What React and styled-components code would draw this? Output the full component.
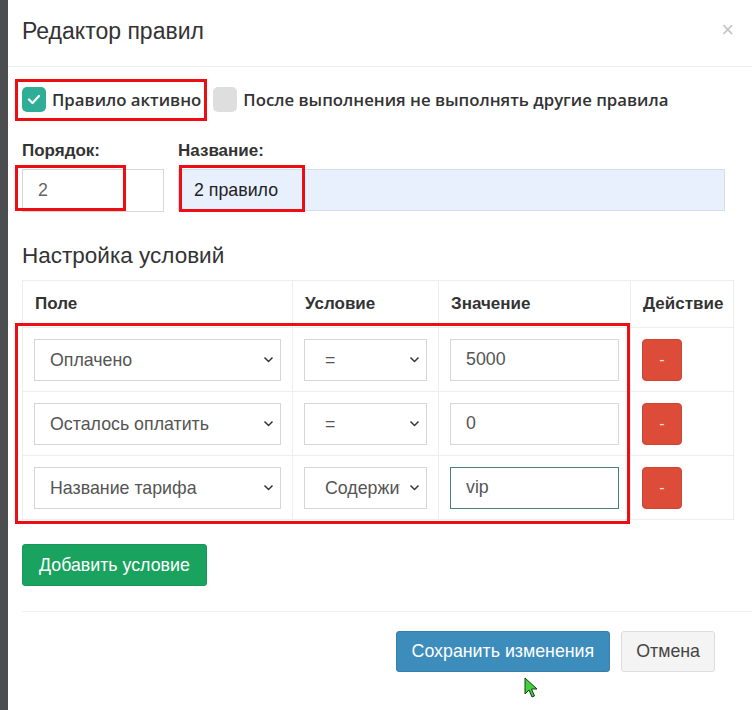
import React from 'react';
import styled, { createGlobalStyle } from 'styled-components';

const GlobalStyle = createGlobalStyle`
    body {
        margin: 0;
        background: #4b4d4f;
        font-family: "Liberation Sans", Arial, sans-serif;
    }
`;

const Modal = styled.div`
    position: relative;
    margin-left: 8px;
    width: 744px;
    height: 710px;
    background: #fff;
    overflow: hidden;
`;

const Header = styled.div`
    display: flex;
    justify-content: space-between;
    align-items: center;
    height: 67px;
    padding: 0 18px 0 14px;
    border-bottom: 1px solid #ececec;
    box-sizing: border-box;
    h4 {
        margin: 0;
        font-size: 23px;
        font-weight: 400;
        color: #333;
        padding-bottom: 4px;
    }
`;

const Close = styled.span`
    font-size: 22px;
    color: #c4c4c4;
    padding-bottom: 6px;
`;

const Body = styled.div`
    padding: 0 19px 0 14px;
`;

const CheckRow = styled.div`
    display: flex;
    align-items: center;
    height: 65px;
`;

const CheckItem = styled.label`
    display: flex;
    align-items: center;
    gap: 6px;
    margin-right: 12px;
    font-family: "Open Sans", sans-serif;
    font-weight: 600;
    font-size: 16.8px;
    color: #333;
`;

const Box = styled.span`
    display: flex;
    align-items: center;
    justify-content: center;
    width: 24px;
    height: 25px;
    border-radius: 5px;
    background: ${p => (p.checked ? '#2fae97' : '#dedede')};
`;

const Fields = styled.div`
    display: grid;
    grid-template-columns: 142px 547px;
    column-gap: 14px;
    row-gap: 8px;
    margin-top: 9px;
`;

const Label = styled.div`
    font-weight: 700;
    font-size: 17px;
    color: #333;
`;

const TextInput = styled.input`
    box-sizing: border-box;
    height: ${p => p.h || 43}px;
    width: 100%;
    border: 1px solid ${p => (p.focused ? '#4d7d7a' : p.auto ? '#d6dde9' : '#d8d8d8')};
    background: ${p => (p.auto ? '#e8f0fe' : '#fff')};
    padding: 0 15px;
    font-family: "Liberation Sans", Arial, sans-serif;
    font-size: 17.8px;
    color: ${p => p.color || '#444'};
    outline: none;
`;

const SectionTitle = styled.h3`
    margin: 31px 0 11px;
    font-size: 22.5px;
    font-weight: 400;
    color: #333;
`;

const Table = styled.table`
    width: 711px;
    table-layout: fixed;
    border-collapse: collapse;
    th, td {
        border: 1px solid #eeeeee;
    }
    th {
        height: 46px;
        text-align: left;
        padding: 0 12px;
        font-size: 17px;
        font-weight: 700;
        color: #333;
    }
    td {
        height: 63px;
        padding: 0 11px;
    }
`;

const SelectWrap = styled.div`
    display: grid;
    align-items: center;
    select, svg {
        grid-area: 1 / 1;
    }
    svg {
        justify-self: end;
        margin-right: 7px;
        pointer-events: none;
    }
`;

const Select = styled.select`
    appearance: none;
    box-sizing: border-box;
    height: 42px;
    width: 100%;
    border: 1px solid #d6d6d6;
    background: #fff;
    padding: 0 26px 0 ${p => p.pl || 15}px;
    font-family: "Liberation Sans", Arial, sans-serif;
    font-size: 17.8px;
    color: #555;
    outline: none;
    text-overflow: clip;
`;

const RemoveBtn = styled.button`
    width: 40px;
    height: 42px;
    border: 1px solid #c94535;
    border-radius: 4px;
    background: #dd4b39;
    color: #fbe3df;
    font-size: 16px;
    font-weight: 400;
`;

const Button = styled.button`
    box-sizing: border-box;
    height: ${p => p.h || 42}px;
    padding: 0 ${p => p.px || 16}px;
    border-radius: 3px;
    border: 1px solid ${p => p.border};
    background: ${p => p.bg};
    color: ${p => p.fg || '#fff'};
    font-family: "Liberation Sans", Arial, sans-serif;
    font-size: 17.8px;
`;

const AddRow = styled.div`
    margin-top: 24px;
    padding-bottom: 25px;
    border-bottom: 1px solid #eeeeee;
    margin-right: -19px;
`;

const Footer = styled.div`
    display: flex;
    justify-content: flex-end;
    gap: 11px;
    padding: 19px 37px 0 0;
`;

const Mark = styled.div`
    position: absolute;
    left: ${p => p.x}px;
    top: ${p => p.y}px;
    width: ${p => p.w}px;
    height: ${p => p.h}px;
    border: 3px solid #ee0d12;
    box-sizing: border-box;
    pointer-events: none;
`;

const Cursor = styled.svg`
    position: absolute;
    left: 516px;
    top: 677px;
`;

const Chevron = () => (
    <svg width="11" height="8" viewBox="0 0 11 8">
        <path d="M1.5 1.5 L5.5 5.5 L9.5 1.5" fill="none" stroke="#333" strokeWidth="1.5" />
    </svg>
);

const rows = [
    { field: 'Оплачено', cond: '=', value: '5000' },
    { field: 'Осталось оплатить', cond: '=', value: '0' },
    { field: 'Название тарифа', cond: 'Содержит', value: 'vip', focused: true },
];

export default function App() {
    return (
        <>
            <GlobalStyle />
            <Modal>
                <Header>
                    <h4>Редактор правил</h4>
                    <Close>×</Close>
                </Header>
                <Body>
                    <CheckRow>
                        <CheckItem>
                            <Box checked>
                                <svg width="14" height="11" viewBox="0 0 14 11">
                                    <path d="M2 5.5 L5.5 9 L12 2" fill="none" stroke="#fff" strokeWidth="2.2" strokeLinecap="round" strokeLinejoin="round" />
                                </svg>
                            </Box>
                            Правило активно
                        </CheckItem>
                        <CheckItem>
                            <Box />
                            После выполнения не выполнять другие правила
                        </CheckItem>
                    </CheckRow>
                    <Fields>
                        <Label>Порядок:</Label>
                        <Label>Название:</Label>
                        <TextInput defaultValue="2" color="#666" />
                        <TextInput defaultValue="2 правило" auto h={42} color="#222" />
                    </Fields>
                    <SectionTitle>Настройка условий</SectionTitle>
                    <Table>
                        <colgroup>
                            <col style={{ width: 270 }} />
                            <col style={{ width: 146 }} />
                            <col style={{ width: 192 }} />
                            <col style={{ width: 103 }} />
                        </colgroup>
                        <thead>
                            <tr>
                                <th>Поле</th>
                                <th>Условие</th>
                                <th>Значение</th>
                                <th>Действие</th>
                            </tr>
                        </thead>
                        <tbody>
                            {rows.map(r => (
                                <tr key={r.field}>
                                    <td>
                                        <SelectWrap>
                                            <Select defaultValue={r.field}>
                                                <option>{r.field}</option>
                                            </Select>
                                            <Chevron />
                                        </SelectWrap>
                                    </td>
                                    <td>
                                        <SelectWrap>
                                            <Select defaultValue={r.cond} pl={20}>
                                                <option>{r.cond}</option>
                                            </Select>
                                            <Chevron />
                                        </SelectWrap>
                                    </td>
                                    <td>
                                        <TextInput defaultValue={r.value} h={42} focused={r.focused} color="#555" />
                                    </td>
                                    <td>
                                        <RemoveBtn>-</RemoveBtn>
                                    </td>
                                </tr>
                            ))}
                        </tbody>
                    </Table>
                    <AddRow>
                        <Button bg="#1aa35f" border="#17985a">Добавить условие</Button>
                    </AddRow>
                </Body>
                <Footer>
                    <Button bg="#3c8dbc" border="#367fa9" h={41} px={15}>Сохранить изменения</Button>
                    <Button bg="#f4f4f4" border="#dddddd" fg="#444" h={41} px={14}>Отмена</Button>
                </Footer>
                <Mark x={7} y={79} w={192} h={42} />
                <Mark x={7} y={165} w={111} h={46} />
                <Mark x={171} y={165} w={126} h={47} />
                <Mark x={7} y={323} w={615} h={201} />
                <Cursor width="14" height="22" viewBox="0 0 14 22">
                    <path d="M1 1 L1 17 L5 13 L8 20 L10.5 19 L7.5 12 L13 12 Z" fill="#3fd13a" stroke="#1b3a1b" strokeWidth="1" />
                </Cursor>
            </Modal>
        </>
    );
}
